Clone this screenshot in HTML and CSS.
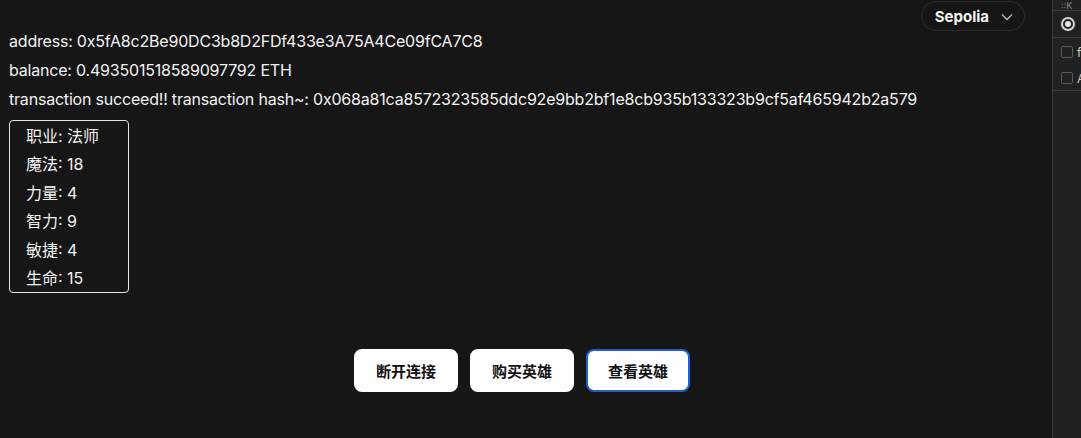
FILE: index.html
```html
<!DOCTYPE html>
<html lang="zh">
<head>
<meta charset="utf-8">
<link rel="stylesheet" href="styles.css">
</head>
<body>
<div class="layout">
  <main class="main">
    <div class="topbar">
      <button class="network">Sepolia
        <svg class="chev" width="12" height="8" viewBox="0 0 12 8"><path d="M1 1.5 L6 6.5 L11 1.5" fill="none" stroke="#bbb" stroke-width="1.3"/></svg>
      </button>
    </div>
    <div class="info">
      <div class="line">address: 0x5fA8c2Be90DC3b8D2FDf433e3A75A4Ce09fCA7C8</div>
      <div class="line">balance: 0.493501518589097792 ETH</div>
      <div class="line">transaction succeed!! transaction hash~: 0x068a81ca8572323585ddc92e9bb2bf1e8cb935b133323b9cf5af465942b2a579</div>
    </div>
    <div class="hero">
      <div class="stat">职业: 法师</div>
      <div class="stat">魔法: 18</div>
      <div class="stat">力量: 4</div>
      <div class="stat">智力: 9</div>
      <div class="stat">敏捷: 4</div>
      <div class="stat">生命: 15</div>
    </div>
    <div class="actions">
      <button class="btn">断开连接</button>
      <button class="btn">购买英雄</button>
      <button class="btn focused">查看英雄</button>
    </div>
  </main>
  <aside class="panel">
    <div class="prow head"><span class="ptext">::K</span></div>
    <div class="prow radio-row"><span class="radio"></span></div>
    <div class="pgroup">
      <div class="cb-row"><span class="cb"></span><span class="ptext">f</span></div>
      <div class="cb-row"><span class="cb"></span><span class="ptext">A</span></div>
    </div>
  </aside>
</div>
</body>
</html>
```

FILE: styles.css
```css
* { box-sizing: border-box; }
html, body { margin: 0; height: 100%; }
body {
  background: #161616;
  color: #f2f2f2;
  font-family: Inter, "Liberation Sans", "Noto Sans CJK SC", sans-serif;
  font-size: 16px;
  overflow: hidden;
}
.layout { display: flex; height: 438px; }
.main { flex: 1; padding: 0 0 0 9px; display: flex; flex-direction: column; }
.topbar { display: flex; justify-content: flex-end; padding: 1px 27px 0 0; height: 27px; }
.network {
  display: flex; align-items: center; gap: 12px;
  height: 30px; padding: 0 11px 0 13px;
  background: #161616; color: #f4f4f4;
  border: 1px solid #2c2c2c; border-radius: 15px;
  font-family: inherit; font-size: 15px; font-weight: 700;
}
.chev { margin-top: 1px; }
.info { display: flex; flex-direction: column; }
.line { line-height: 29px; white-space: nowrap; letter-spacing: -0.2px; }
.hero {
  align-self: flex-start;
  margin-top: 6px;
  width: 120px;
  border: 1px solid #e6e6e6;
  border-radius: 4px;
  padding: 1px 0 0 16px;
}
.stat { line-height: 28.4px; }
.actions {
  display: flex; justify-content: center; gap: 12px;
  margin-top: 56px;
  padding-right: 17px;
}
.btn {
  width: 104px; height: 43px;
  background: #fff; color: #111;
  border: 2px solid #fff; border-radius: 8px;
  font-family: "Noto Sans CJK SC", sans-serif;
  font-size: 15px; font-weight: 600;
}
.btn.focused { border-color: #1f5fd0; }
.panel {
  width: 29px;
  background: #212121;
  border-left: 1px solid #3c3c3c;
  display: flex; flex-direction: column;
  overflow: hidden;
}
.prow { border-bottom: 1px solid #3c3c3c; display: flex; align-items: center; padding-left: 8px; }
.head { height: 11px; align-items: flex-end; }
.head .ptext { font-size: 9px; line-height: 9px; color: #888; }
.radio-row { height: 27px; }
.radio {
  width: 14px; height: 14px; border-radius: 50%;
  border: 2px solid #d8d8d8;
  display: flex; align-items: center; justify-content: center;
}
.radio::after { content: ""; width: 6px; height: 6px; border-radius: 50%; background: #e6e6e6; }
.pgroup { border-bottom: 1px solid #3c3c3c; padding: 8px 0 6px 8px; display: flex; flex-direction: column; gap: 14px; }
.cb-row { display: flex; align-items: center; gap: 4px; height: 12px; }
.cb { width: 12px; height: 12px; border: 1px solid #5a5a5a; border-radius: 2px; flex: none; }
.ptext { font-size: 12px; color: #ccc; }
```
